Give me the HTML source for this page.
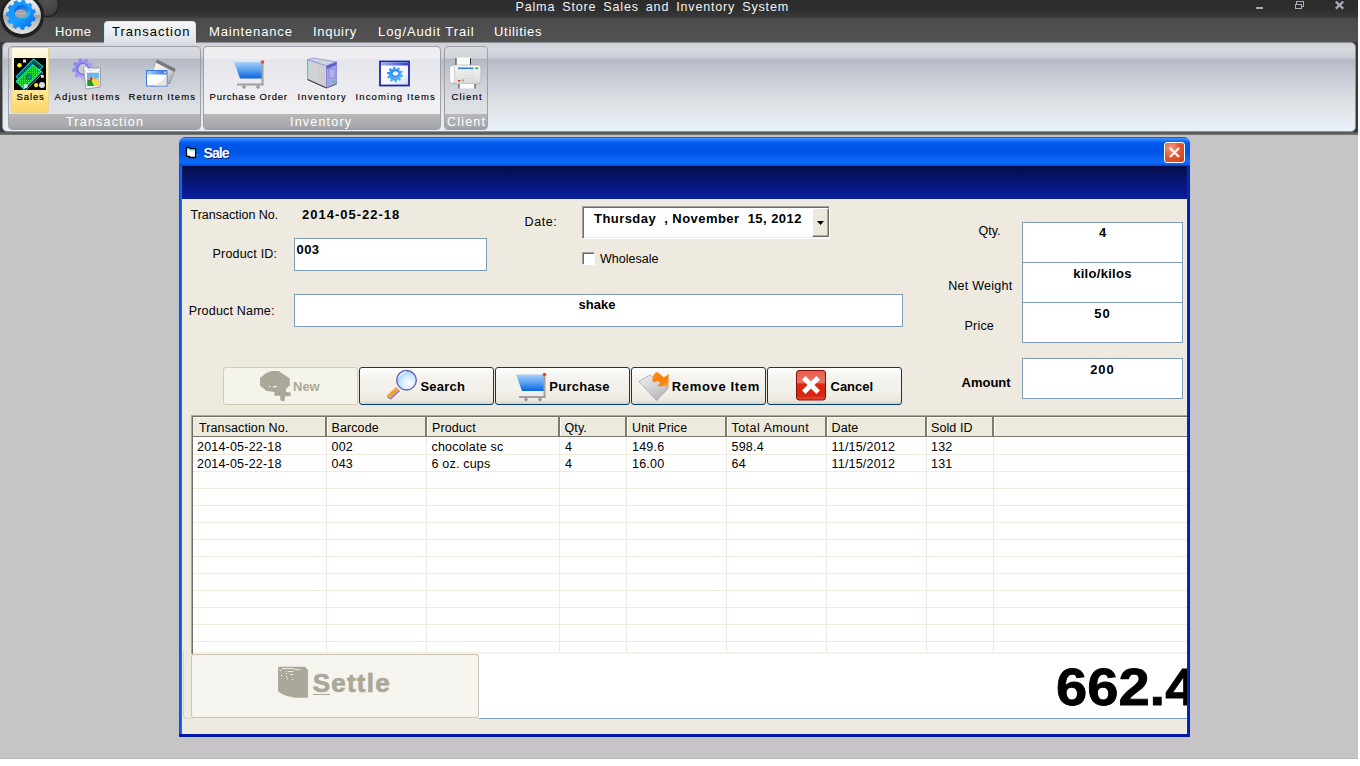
<!DOCTYPE html>
<html><head><meta charset="utf-8">
<style>
*{box-sizing:border-box;margin:0;padding:0}
html,body{width:1360px;height:766px;overflow:hidden;background:#fff;font-family:"Liberation Sans",sans-serif}
.a{position:absolute}
svg.a{overflow:visible}
.t{position:absolute;white-space:pre;line-height:1}
#app{position:absolute;left:0;top:0;width:1358px;height:759px;background:#c6c4c7;overflow:hidden}
</style></head><body>
<div id="app">
<div class="a" style="left:0px;top:0px;width:1358px;height:18px;background:linear-gradient(#2b2b2b 0%,#2e2e2e 50%,#363636 85%,#3e3e3e 100%)"></div>
<div class="t" style="left:515.5px;top:1.3px;font-size:12.6px;color:#f2f2f2;letter-spacing:0.8px;word-spacing:2.7px">Palma Store Sales and Inventory System</div>
<div class="a" style="left:1256px;top:6.8px;width:7px;height:2.5px;background:#a9adb7"></div>
<div class="a" style="left:1296px;top:1px;width:8px;height:6px;border:1px solid #a9adb7;border-width:1.5px 1px 1px 1px"></div>
<div class="a" style="left:1295px;top:3.5px;width:7px;height:5px;border:1px solid #a9adb7;border-width:1.5px 1px 1px 1px;background:#2d2d2d"></div>
<svg class="a" style="left:1334px;top:0px" width="11" height="10" viewBox="0 0 11 10"><path d="M1.8 1.6 L9.2 8.6 M9.2 1.6 L1.8 8.6" stroke="#a9adb7" stroke-width="2.2"/></svg>
<div class="a" style="left:0px;top:18px;width:1358px;height:25px;background:linear-gradient(#474747 0%,#4c4c4c 10%,#525252 100%)"></div>
<div class="a" style="left:36px;top:-7px;width:23px;height:24px;border-radius:50%;border:1.5px solid #1e1e1e;background:radial-gradient(circle at 50% 30%,#525252,#444 60%,#383838 100%)"></div>
<div class="a" style="left:0px;top:-6px;width:44px;height:44px;border-radius:50%;background:radial-gradient(circle,#202020 78%,#2c2c2c 90%,#3c3c3c 100%)"></div>
<div class="a" style="left:3px;top:-3px;width:38px;height:37px;border-radius:50%;background:linear-gradient(#f4f4f4 0%,#e0e0e0 25%,#c4c4c4 48%,#a2a2a2 50%,#b4b4b4 62%,#d2d2d2 85%,#e6e6e6 100%)"></div>
<svg class="a" style="left:0px;top:0px" width="44" height="36" viewBox="0 0 44 36"><defs><linearGradient id="og" x1="0" y1="0" x2="1" y2="1"><stop offset="0" stop-color="#1688f0"/><stop offset="0.5" stop-color="#1aa0ff"/><stop offset="1" stop-color="#0a60e0"/></linearGradient></defs><polygon points="21.00,2.00 21.86,-0.18 25.39,0.46 25.44,2.79 27.92,4.03 29.82,2.66 32.45,5.11 31.22,7.10 32.64,9.48 34.98,9.36 35.87,12.84 33.76,13.85 33.67,16.62 35.70,17.78 34.57,21.19 32.25,20.90 30.67,23.18 31.76,25.25 28.96,27.51 27.17,26.02 24.61,27.08 24.40,29.41 20.83,29.80 20.12,27.57 17.39,27.08 15.96,28.93 12.75,27.33 13.36,25.07 11.33,23.18 9.12,23.96 7.29,20.87 9.02,19.31 8.33,16.62 6.06,16.08 6.18,12.50 8.48,12.11 9.36,9.48 7.73,7.80 9.78,4.85 11.92,5.77 14.08,4.03 13.62,1.74 16.94,0.36 18.24,2.30" fill="url(#og)"/><defs><linearGradient id="oh" x1="0" y1="0" x2="1" y2="1"><stop offset="0" stop-color="#0850d0"/><stop offset="0.6" stop-color="#1a90f8"/><stop offset="1" stop-color="#50e0ff"/></linearGradient></defs><ellipse cx="22.2" cy="12" rx="8" ry="7" fill="url(#oh)"/><ellipse cx="20.8" cy="13.6" rx="6" ry="4.3" fill="#a4a4a4"/><path d="M15 13.6 h12" stroke="#b8b8b8" stroke-width="1"/></svg>
<div class="t" style="left:55px;top:25.0px;font-size:13px;color:#fff;letter-spacing:0.4px;">Home</div>
<div class="t" style="left:209px;top:25.0px;font-size:13px;color:#fff;letter-spacing:0.85px;">Maintenance</div>
<div class="t" style="left:313px;top:25.0px;font-size:13px;color:#fff;letter-spacing:0.7px;">Inquiry</div>
<div class="t" style="left:378px;top:25.0px;font-size:13px;color:#fff;letter-spacing:0.9px;">Log/Audit Trail</div>
<div class="t" style="left:494px;top:25.0px;font-size:13px;color:#fff;letter-spacing:0.7px;">Utilities</div>
<div class="a" style="left:0px;top:42px;width:1358px;height:93px;background:#3a3a3a"></div>
<div class="a" style="left:2px;top:42px;width:1354px;height:90px;border-radius:5px;background:linear-gradient(#cfd2da 0%,#d6d9df 8%,#c9ccd5 17%,#b6bac6 19%,#c4c8d1 35%,#d3d6dd 52%,#dfe2e6 70%,#e4ebf0 85%,#e8f2f8 100%);border:1px solid #8f9096"></div>
<div class="a" style="left:104px;top:20.5px;width:92px;height:24px;border-radius:4px 4px 0 0;background:linear-gradient(#f4f5f7 0%,#eceef1 40%,#dfe2e8 80%,#d6d9e0 100%);border:1px solid #c4ecf6;border-bottom:none"></div>
<div class="t" style="left:112px;top:25.0px;font-size:13px;color:#000;letter-spacing:1.0px;">Transaction</div>
<div class="a" style="left:0px;top:131.5px;width:1358px;height:3.5px;background:linear-gradient(#585c58,#5e625e 70%,#8a8a8a)"></div>
<div class="a" style="left:8px;top:46px;width:193px;height:84px;border:1px solid #9ea0a6;border-radius:4px;overflow:hidden;background:linear-gradient(#d9dbe1 0%,#d2d5dc 13%,#b4b8c4 15%,#c2c6cf 30%,#d0d3da 50%,#dcdfe3 70%,#e2e6ea 100%)"></div>
<div class="a" style="left:9px;top:114px;width:191px;height:15px;border-radius:0 0 3px 3px;background:linear-gradient(#b8b8ba 0%,#b0b0b2 40%,#a6a8ac 85%,#9a9ca0 100%)"></div>
<div class="t" style="left:66px;top:115.6px;font-size:12.5px;color:#ffffff;letter-spacing:1.2px;">Transaction</div>
<div class="a" style="left:203px;top:46px;width:238px;height:84px;border:1px solid #9ea0a6;border-radius:4px;overflow:hidden;background:linear-gradient(#efedf0 0%,#eeedf1 14%,#e4e4ec 16%,#eaeaef 40%,#efeff2 70%,#f3f3f5 100%)"></div>
<div class="a" style="left:204px;top:114px;width:236px;height:15px;border-radius:0 0 3px 3px;background:linear-gradient(#b8b8ba 0%,#b0b0b2 40%,#a6a8ac 85%,#9a9ca0 100%)"></div>
<div class="t" style="left:290px;top:115.6px;font-size:12.5px;color:#ffffff;letter-spacing:1.2px;">Inventory</div>
<div class="a" style="left:444px;top:46px;width:44px;height:84px;border:1px solid #9ea0a6;border-radius:4px;overflow:hidden;background:linear-gradient(#d9dbe1 0%,#d2d5dc 13%,#b4b8c4 15%,#c2c6cf 30%,#d0d3da 50%,#dcdfe3 70%,#e2e6ea 100%)"></div>
<div class="a" style="left:445px;top:114px;width:42px;height:15px;border-radius:0 0 3px 3px;background:linear-gradient(#b8b8ba 0%,#b0b0b2 40%,#a6a8ac 85%,#9a9ca0 100%)"></div>
<div class="t" style="left:447px;top:115.6px;font-size:12.5px;color:#ffffff;letter-spacing:1.2px;">Client</div>
<div class="a" style="left:11px;top:47px;width:38px;height:66px;border:1px solid #e8d494;border-radius:2px;background:linear-gradient(#fffbe6 0%,#fff3c4 30%,#ffe9a0 60%,#ffd66a 100%)"></div>
<div class="t" style="left:16.5px;top:91.9px;font-size:9.5px;color:#000;letter-spacing:0.9px;-webkit-text-stroke:0.15px #000">Sales</div>
<div class="t" style="left:54.5px;top:91.9px;font-size:9.5px;color:#000;letter-spacing:1.15px;-webkit-text-stroke:0.15px #000">Adjust Items</div>
<div class="t" style="left:128.5px;top:91.9px;font-size:9.5px;color:#000;letter-spacing:1.1px;-webkit-text-stroke:0.15px #000">Return Items</div>
<div class="t" style="left:209.5px;top:91.9px;font-size:9.5px;color:#000;letter-spacing:0.8px;-webkit-text-stroke:0.15px #000">Purchase Order</div>
<div class="t" style="left:297.5px;top:91.9px;font-size:9.5px;color:#000;letter-spacing:1.15px;-webkit-text-stroke:0.15px #000">Inventory</div>
<div class="t" style="left:355.5px;top:91.9px;font-size:9.5px;color:#000;letter-spacing:1.15px;-webkit-text-stroke:0.15px #000">Incoming Items</div>
<div class="t" style="left:451.5px;top:91.9px;font-size:9.5px;color:#000;letter-spacing:1.15px;-webkit-text-stroke:0.15px #000">Client</div>
<svg class="a" style="left:14px;top:58px" width="32" height="32" viewBox="0 0 32 32"><rect x="0" y="0" width="32" height="32" fill="#000"/>
<defs><pattern id="gp" width="2" height="2" patternUnits="userSpaceOnUse"><rect width="2" height="2" fill="#10b810"/><rect width="1" height="1" fill="#40f040"/></pattern></defs>
<path d="M2.2 18.7 L19.5 1.1 L28.6 8.6 L11.3 26.2z" fill="#032828" stroke="#00e0e0" stroke-width="1.1"/>
<path d="M4.5 18.5 L19.5 3.5 L26 9" stroke="#0a8080" stroke-width="1" fill="none"/>
<path d="M3 24.5 L19.5 8 L29 15 L11.5 32.5" stroke="#888" stroke-width="0.9" fill="none"/>
<path d="M2.2 23.3 L18.8 6.7 L27.3 13.5 L10 31.1z" fill="url(#gp)" stroke="#00e8e8" stroke-width="1.2"/>
<circle cx="14.8" cy="18.9" r="3" fill="#0a7878"/><path d="M13.5 19.5 Q15 21 16.5 18.5" stroke="#20e020" stroke-width="1" fill="none"/>
<rect x="9" y="1.5" width="3" height="3" fill="#ddd"/>
<circle cx="5.5" cy="7.3" r="2.3" fill="#f0f000"/><circle cx="5.5" cy="7.3" r="0.8" fill="#fff"/>
<rect x="27" y="17" width="2.8" height="2.8" fill="#ddd"/>
<circle cx="11.7" cy="28" r="2.2" fill="#ddd"/>
<circle cx="22.1" cy="27.2" r="2.1" fill="#f0f000"/>
<circle cx="28" cy="27" r="3" fill="#ddd"/></svg>
<svg class="a" style="left:68px;top:54px" width="36" height="38" viewBox="0 0 36 38"><defs><linearGradient id="gg" x1="0" y1="0" x2="1" y2="1"><stop offset="0" stop-color="#7a78f0"/><stop offset="0.6" stop-color="#a8a0f8"/><stop offset="1" stop-color="#d8d0ff"/></linearGradient></defs><polygon points="23.50,15.00 25.94,16.15 25.34,18.76 22.64,18.73 21.51,20.46 22.64,22.91 20.50,24.53 18.46,22.77 16.48,23.37 15.77,25.97 13.09,25.83 12.66,23.17 10.75,22.36 8.53,23.90 6.57,22.07 7.95,19.75 7.01,17.91 4.33,17.66 4.00,15.00 6.55,14.11 7.01,12.09 5.11,10.18 6.57,7.93 9.10,8.89 10.75,7.64 10.53,4.95 13.09,4.17 14.41,6.52 16.48,6.63 18.03,4.43 20.50,5.47 20.00,8.12 21.51,9.54 24.12,8.85 25.34,11.24 23.25,12.94" fill="url(#gg)"/><circle cx="15" cy="15" r="5.5" fill="#c4c8d2" stroke="#6a68d8" stroke-width="1.2"/><path d="M15.5 14 L18 35 L32 33 L32.5 14 Z" fill="#f4f8ff" stroke="#555" stroke-width="0.5"/><path d="M15.5 14 L19 12.5 L21 17 L32.5 14 L31 18 L18 19z" fill="#ffffff" stroke="#9ab" stroke-width="0.4"/><rect x="19" y="19" width="12" height="13" fill="#60b8f4"/><path d="M19.5 32 L22 24 L25.5 22 L27 26 L30.5 23 L31 32z" fill="#f8d848"/><path d="M19.5 32 L19.5 26 L23 25 L26 32z" fill="#10a020"/><path d="M21 26 L23.5 22.5 L25 24.5 L23 27z" fill="#e82020"/><path d="M19.5 26 L21.5 24 L22.5 26z" fill="#f89020"/></svg>
<svg class="a" style="left:142px;top:54px" width="38" height="38" viewBox="0 0 38 38"><defs><linearGradient id="bw" x1="0" y1="0" x2="1" y2="1"><stop offset="0" stop-color="#ffffff"/><stop offset="0.5" stop-color="#e8e8e8"/><stop offset="1" stop-color="#909090"/></linearGradient><linearGradient id="fw" x1="0" y1="0" x2="1" y2="0"><stop offset="0" stop-color="#a8d4fc"/><stop offset="1" stop-color="#2a6ee0"/></linearGradient></defs><path d="M15 5.5 L33.5 15 L27.5 30 L9 21z" fill="url(#bw)" stroke="#444" stroke-width="0.6" stroke-dasharray="0.8 1"/><path d="M15 5.5 L33.5 15 L32.3 18 L13.8 8.5z" fill="#787878"/><rect x="4.5" y="16.5" width="20.5" height="15.5" fill="#fff" stroke="#3a7ae8" stroke-width="1"/><rect x="5" y="17" width="19.5" height="3.5" fill="url(#fw)"/><rect x="22" y="17.5" width="1.6" height="1.6" fill="#fff"/><path d="M12 31.5 Q20 28 24.5 22 L24.5 31.5z" fill="#e8e4e0"/></svg>
<svg class="a" style="left:0px;top:0px" width="600" height="120" viewBox="0 0 600 120"><defs><linearGradient id="cg234" x1="0" y1="0" x2="0" y2="1"><stop offset="0" stop-color="#a8d0fa"/><stop offset="0.5" stop-color="#5aa0f0"/><stop offset="1" stop-color="#0a64e0"/></linearGradient></defs><path d="M234 62 L262 62 L262 78.5 L240 78.5z" fill="url(#cg234)"/><rect x="261.5" y="62" width="2" height="23" fill="#a0a0a0"/><rect x="237" y="83.5" width="26.5" height="2" fill="#a0a0a0"/><circle cx="244" cy="87" r="1.8" fill="#999"/><circle cx="258" cy="87" r="1.8" fill="#999"/><circle cx="262.5" cy="62" r="1.8" fill="#f04030"/></svg>
<svg class="a" style="left:302px;top:54px" width="40" height="38" viewBox="0 0 40 38"><path d="M5.5 5.5 L12 4 L34.5 8 L24.5 12z" fill="#c8d8d8" stroke="#9090e0" stroke-width="0.8"/><path d="M5.5 5.5 L24.5 12 L24.5 34 L5.5 25.5z" fill="#d2d2d4" stroke="#8a8ae0" stroke-width="0.8"/><path d="M5.5 25.5 L24.5 34" stroke="#444" stroke-width="1.2"/><path d="M6.5 8 L6.5 22 M17 11 L17 30 M19.5 12 L19.5 31 M22 13 L22 32" stroke="#80d0d0" stroke-width="0.7" stroke-dasharray="1 1"/><path d="M24.5 12 L34.5 8 L34.5 30 L24.5 34z" fill="#a4a4e4" stroke="#7070d0" stroke-width="0.6"/><path d="M24.5 12 L34.5 8 L34.5 11 L24.5 15z" fill="#5c5cd0"/><rect x="27" y="15" width="6" height="9" fill="#b0b0ec" stroke="#5050b0" stroke-width="0.6" stroke-dasharray="1 0.8"/><circle cx="32.2" cy="27.5" r="1" fill="#10e040"/><path d="M24.5 34 L34.5 30" stroke="#555" stroke-width="0.8"/></svg>
<svg class="a" style="left:0px;top:0px" width="500" height="100" viewBox="0 0 500 100"><defs><linearGradient id="itb" x1="0" y1="0" x2="1" y2="0"><stop offset="0" stop-color="#a8b0f0"/><stop offset="1" stop-color="#3040d0"/></linearGradient><linearGradient id="ibd" x1="0" y1="0" x2="1" y2="1"><stop offset="0" stop-color="#ffffff"/><stop offset="0.7" stop-color="#f4f4fc"/><stop offset="1" stop-color="#d0d0e8"/></linearGradient><linearGradient id="igr" x1="0" y1="0" x2="1" y2="1"><stop offset="0" stop-color="#2890f8"/><stop offset="1" stop-color="#60c0ff"/></linearGradient></defs><rect x="380" y="61.5" width="29" height="24" fill="url(#ibd)" stroke="#1a28b0" stroke-width="1.8"/><rect x="381" y="62.5" width="27" height="3" fill="url(#itb)"/><polygon points="401.30,74.50 403.26,75.24 402.89,76.94 400.78,76.88 400.10,78.02 401.23,79.71 399.88,80.88 398.21,79.65 396.95,80.19 396.81,82.20 395.00,82.39 394.41,80.46 393.05,80.19 391.70,81.74 390.12,80.88 390.83,78.99 389.90,78.02 387.86,78.51 387.11,76.94 388.85,75.81 388.70,74.50 386.74,73.76 387.11,72.06 389.22,72.12 389.90,70.98 388.77,69.29 390.12,68.12 391.79,69.35 393.05,68.81 393.19,66.80 395.00,66.61 395.59,68.54 396.95,68.81 398.30,67.26 399.88,68.12 399.17,70.01 400.10,70.98 402.14,70.49 402.89,72.06 401.15,73.19" fill="url(#igr)"/><ellipse cx="395.5" cy="73.5" rx="3.6" ry="2.8" fill="#f0f4ff" stroke="#1a70e0" stroke-width="1"/></svg>
<svg class="a" style="left:0px;top:0px" width="500" height="100" viewBox="0 0 500 100"><defs><linearGradient id="pb" x1="0" y1="0" x2="0" y2="1"><stop offset="0" stop-color="#f8f8f8"/><stop offset="1" stop-color="#d8d8d8"/></linearGradient></defs><rect x="456" y="57.5" width="14.5" height="8" fill="#fafafa"/><path d="M456 58 L456 65 M470.5 58 L470.5 65" stroke="#222" stroke-width="0.9"/><path d="M453 65 L478 65 Q481 65 481 69 L481 81 Q481 84 477 84 L454 84 Q450 84 450 81 L450 69 Q450 65 453 65z" fill="url(#pb)" stroke="#999" stroke-width="0.5"/><path d="M450 66 Q449 75 450 83 L454.5 83 L454.5 66z" fill="#fcfcfc" stroke="#b0b0b0" stroke-width="0.5"/><rect x="458" y="67.5" width="15.5" height="1.6" fill="#3a80e0"/><rect x="475.5" y="67.3" width="2.6" height="2" fill="#30c030"/><path d="M465 72 h9 M465 75 h9 M465 78 h9" stroke="#d0d0d0" stroke-width="0.8" stroke-dasharray="1.2 1"/><rect x="458" y="80" width="2.5" height="1.5" fill="#e03030"/><rect x="462.5" y="79.5" width="1.2" height="2" fill="#30c030"/><rect x="459" y="84" width="16" height="4.5" fill="#fafafa"/><path d="M459 84 L459 88.5 M475 84 L475 88.5" stroke="#222" stroke-width="0.9"/></svg>
<div class="a" style="left:179px;top:137px;width:1011px;height:600px;background:linear-gradient(90deg,#0a4ee8 0,#0831d9 3px,#0831d9 calc(100% - 3px),#0a3ad0 100%);border-radius:7px 7px 0 0"></div>
<div class="a" style="left:179px;top:137px;width:1011px;height:29px;border-radius:7px 7px 0 0;background:linear-gradient(#0a48d8 0%,#3a94ff 6%,#1a74fa 12%,#0058ea 22%,#0054e6 55%,#0a68fa 80%,#0a6cff 90%,#0048d0 100%)"></div>
<div class="a" style="left:179px;top:166px;width:3px;height:571px;background:linear-gradient(90deg,#0048d8,#1a70ff)"></div>
<div class="a" style="left:1187px;top:166px;width:3px;height:571px;background:linear-gradient(90deg,#0030c0,#001ea0)"></div>
<div class="a" style="left:179px;top:734px;width:1011px;height:3px;background:#0019a8"></div>
<svg class="a" style="left:185px;top:146px" width="14" height="13" viewBox="0 0 14 13"><path d="M1.5 1.5 L4.5 1.5 L4.5 2.6 L10.6 2.6 L10.6 11.5 L4.5 11.5 L4.5 10.4 L1.5 10.4z" fill="#fff" stroke="#000" stroke-width="1.3"/><path d="M2.3 2.6 L4.3 2.6 M5 3.8 L10 3.8" stroke="#10e0e8" stroke-width="1.2"/><rect x="11.5" y="8.5" width="1.5" height="1.2" fill="#a08860"/></svg>
<div class="t" style="left:203.5px;top:146.1px;font-size:14px;font-weight:bold;color:#fff;letter-spacing:-0.9px;text-shadow:1px 1px 0 #0a1a70">Sale</div>
<div class="a" style="left:1164px;top:142px;width:21px;height:21px;border:1px solid #fff;border-radius:3px;background:radial-gradient(circle at 30% 25%,#f39a80 0%,#e45a36 45%,#cc3e18 100%)"></div>
<svg class="a" style="left:1164px;top:142px" width="21" height="21" viewBox="0 0 21 21"><path d="M6 6 L15 15 M15 6 L6 15" stroke="#fff" stroke-width="2.2"/></svg>
<div class="a" style="left:182px;top:166px;width:1005px;height:33px;background:linear-gradient(#040c48 0%,#061466 35%,#08198a 70%,#0a1e9c 100%)"></div>
<div class="a" style="left:182px;top:199px;width:1005px;height:535px;background:#eeeae0"></div>
<div class="t" style="left:190.5px;top:208.7px;font-size:12.5px;color:#000;">Transaction No.</div>
<div class="t" style="left:302px;top:208.3px;font-size:13px;font-weight:bold;color:#000;letter-spacing:1px;">2014-05-22-18</div>
<div class="t" style="left:212.5px;top:248.4px;font-size:12.5px;color:#000;letter-spacing:0.2px;">Product ID:</div>
<div class="a" style="left:294px;top:238px;width:193px;height:33px;background:#fff;border:1px solid #7f9db9"></div>
<div class="t" style="left:296.5px;top:243.0px;font-size:13px;font-weight:bold;color:#000;letter-spacing:0.4px;">003</div>
<div class="t" style="left:188.7px;top:304.7px;font-size:12.5px;color:#000;letter-spacing:0.2px;">Product Name:</div>
<div class="a" style="left:294px;top:294px;width:609px;height:33px;background:#fff;border:1px solid #7f9db9"></div>
<div class="t" style="left:578.5px;top:298.4px;font-size:13px;font-weight:bold;color:#000;">shake</div>
<div class="t" style="left:524.5px;top:216.4px;font-size:12.5px;color:#000;letter-spacing:0.6px;">Date:</div>
<div class="a" style="left:582px;top:206px;width:248px;height:33px;background:#fff;border:1px solid;border-color:#a0a0a0 #fff #fff #a0a0a0;box-shadow:inset 1px 1px 0 #716f64, inset -1px -1px 0 #f1efe2"></div>
<div class="t" style="left:594px;top:211.6px;font-size:13px;font-weight:bold;color:#000;letter-spacing:0.45px;">Thursday  , November  15, 2012</div>
<div class="a" style="left:812px;top:208px;width:17px;height:29px;background:#ece9dc;border:1px solid;border-color:#fff #716f64 #716f64 #fff;box-shadow:inset -1px -1px 0 #aca899"></div>
<svg class="a" style="left:817px;top:221px" width="7" height="4" viewBox="0 0 7 4"><path d="M0 0 L7 0 L3.5 4z" fill="#000"/></svg>
<div class="a" style="left:582px;top:252px;width:13px;height:13px;background:#fff;border:1px solid;border-color:#a0a0a0 #fff #fff #a0a0a0;box-shadow:inset 1px 1px 0 #716f64"></div>
<div class="t" style="left:600px;top:252.6px;font-size:12.5px;color:#000;">Wholesale</div>
<div class="t" style="left:978.5px;top:224.7px;font-size:12.5px;color:#000;">Qty.</div>
<div class="t" style="left:948.3px;top:279.8px;font-size:12.5px;color:#000;letter-spacing:0.25px;">Net Weight</div>
<div class="t" style="left:964.5px;top:320.0px;font-size:12.5px;color:#000;letter-spacing:0.2px;">Price</div>
<div class="t" style="left:961.5px;top:375.7px;font-size:13px;font-weight:bold;color:#000;">Amount</div>
<div class="a" style="left:1022px;top:222px;width:161px;height:41px;background:#fff;border:1px solid #7f9db9"></div>
<div class="a" style="left:1022px;top:262px;width:161px;height:41px;background:#fff;border:1px solid #7f9db9"></div>
<div class="a" style="left:1022px;top:302px;width:161px;height:41px;background:#fff;border:1px solid #7f9db9"></div>
<div class="a" style="left:1022px;top:358px;width:161px;height:41px;background:#fff;border:1px solid #7f9db9"></div>
<div class="t" style="left:1022px;width:161px;text-align:center;top:226.4px;font-size:13px;font-weight:bold;">4</div>
<div class="t" style="left:1022px;width:161px;text-align:center;top:266.9px;font-size:13px;font-weight:bold;letter-spacing:0.3px;">kilo/kilos</div>
<div class="t" style="left:1022px;width:161px;text-align:center;top:306.5px;font-size:13px;font-weight:bold;letter-spacing:1px;">50</div>
<div class="t" style="left:1022px;width:161px;text-align:center;top:362.7px;font-size:13px;font-weight:bold;letter-spacing:1px;">200</div>
<div class="a" style="left:223px;top:367px;width:135px;height:38px;border:1px solid #d1ccba;border-radius:3px;background:#f5f4ea"></div>
<div class="t" style="left:293px;top:380.0px;font-size:13px;font-weight:bold;color:#aca899;">New</div>
<div class="a" style="left:359px;top:367px;width:135px;height:38px;border:1px solid #003c74;border-radius:3px;background:linear-gradient(#ffffff 0%,#fbfbf8 8%,#f4f3ee 30%,#f1efe8 70%,#ebe8df 90%,#d8d2c4 100%)"></div>
<div class="a" style="left:495px;top:367px;width:135px;height:38px;border:1px solid #003c74;border-radius:3px;background:linear-gradient(#ffffff 0%,#fbfbf8 8%,#f4f3ee 30%,#f1efe8 70%,#ebe8df 90%,#d8d2c4 100%)"></div>
<div class="a" style="left:631px;top:367px;width:135px;height:38px;border:1px solid #003c74;border-radius:3px;background:linear-gradient(#ffffff 0%,#fbfbf8 8%,#f4f3ee 30%,#f1efe8 70%,#ebe8df 90%,#d8d2c4 100%)"></div>
<div class="a" style="left:767px;top:367px;width:135px;height:38px;border:1px solid #003c74;border-radius:3px;background:linear-gradient(#ffffff 0%,#fbfbf8 8%,#f4f3ee 30%,#f1efe8 70%,#ebe8df 90%,#d8d2c4 100%)"></div>
<div class="t" style="left:420.5px;top:380.0px;font-size:13px;font-weight:bold;color:#000;letter-spacing:0.2px;">Search</div>
<div class="t" style="left:549.3px;top:380.0px;font-size:13px;font-weight:bold;color:#000;letter-spacing:0.25px;">Purchase</div>
<div class="t" style="left:671.8px;top:380.0px;font-size:13px;font-weight:bold;color:#000;letter-spacing:0.65px;">Remove Item</div>
<div class="t" style="left:830.5px;top:380.0px;font-size:13px;font-weight:bold;color:#000;">Cancel</div>
<svg class="a" style="left:255px;top:366px" width="40" height="38" viewBox="0 0 40 38"><path d="M16.4 5 L23.6 5 L29 8.5 L34.8 12.5 L34.8 19.5 L31 23 L31 26 L35.7 26.5 L35.7 30 L29.8 30.5 L29.8 34.5 L27.5 35.5 L25.2 34 L25.2 29.8 L19.4 29.8 L19.4 26 L11.5 25 L5 19.5 L5 12 L11 7z" fill="#aca899"/><rect x="14" y="20" width="1.2" height="1.2" fill="#f5f4ea"/><rect x="18" y="20" width="4" height="1.2" fill="#f5f4ea"/></svg>
<svg class="a" style="left:380px;top:366px" width="40" height="38" viewBox="0 0 40 38"><defs><radialGradient id="mg" cx="0.6" cy="0.65" r="0.6"><stop offset="0" stop-color="#ffffff"/><stop offset="0.6" stop-color="#d0ecfc"/><stop offset="1" stop-color="#a0d0f8"/></radialGradient></defs><path d="M7 29.5 L16 21 L19 24 L10 32.5z" fill="#f8a030"/><path d="M10 32.5 L19 24 L20 25 L11 33.5z" fill="#8a70c8"/><path d="M7 29.5 L10 32.5 L11 33.5 L8 32z" fill="#705090"/><circle cx="26.5" cy="14.2" r="9.8" fill="url(#mg)" stroke="#6a5aa8" stroke-width="1.3"/><path d="M19 11 Q21 7 26 6" stroke="#fff" stroke-width="1.5" fill="none" opacity="0.8"/></svg>
<svg class="a" style="left:0px;top:0px" width="600" height="420" viewBox="0 0 600 420"><defs><linearGradient id="cg516" x1="0" y1="0" x2="0" y2="1"><stop offset="0" stop-color="#a8d0fa"/><stop offset="0.5" stop-color="#5aa0f0"/><stop offset="1" stop-color="#0a64e0"/></linearGradient></defs><path d="M516 374.5 L544 374.5 L544 391.0 L522 391.0z" fill="url(#cg516)"/><rect x="543.5" y="374.5" width="2" height="23" fill="#a0a0a0"/><rect x="519" y="396.0" width="26.5" height="2" fill="#a0a0a0"/><circle cx="526" cy="399.5" r="1.8" fill="#999"/><circle cx="540" cy="399.5" r="1.8" fill="#999"/><circle cx="544.5" cy="374.5" r="1.8" fill="#f04030"/></svg>
<svg class="a" style="left:635px;top:368px" width="40" height="36" viewBox="0 0 40 36"><defs><linearGradient id="rg" x1="0" y1="0" x2="0.6" y2="1"><stop offset="0" stop-color="#f2f2f2"/><stop offset="1" stop-color="#b8b8bc"/></linearGradient><linearGradient id="ag" x1="0" y1="0" x2="1" y2="1"><stop offset="0" stop-color="#ff8a10"/><stop offset="0.7" stop-color="#f88010"/><stop offset="1" stop-color="#ffb060"/></linearGradient></defs><path d="M4 13.6 L14.6 7 L33.8 19.7 L21.6 32.4 Z" fill="url(#rg)" stroke="#707070" stroke-width="0.7" stroke-dasharray="1 0.6"/><path d="M17.5 11 Q18 5 22.5 4 L29 9.5 L33.6 6 L33.6 18.2 L22 18.2 L25.5 14.8 L22.5 12.8 Q20 15.5 17.5 13z" fill="url(#ag)"/></svg>
<svg class="a" style="left:796px;top:370px" width="30" height="31" viewBox="0 0 30 31"><defs><linearGradient id="xg" x1="0" y1="0" x2="0" y2="1"><stop offset="0" stop-color="#ec5a48"/><stop offset="0.42" stop-color="#e87868"/><stop offset="0.45" stop-color="#de2a14"/><stop offset="0.85" stop-color="#d82410"/><stop offset="1" stop-color="#e85040"/></linearGradient></defs><rect x="0.5" y="0.5" width="29" height="29.5" rx="2.5" fill="url(#xg)" stroke="#801010" stroke-width="1"/><path d="M7.8 7.8 L22.2 22.2 M22.2 7.8 L7.8 22.2" stroke="#fff" stroke-width="5"/></svg>
<div class="a" style="left:191px;top:415px;width:996px;height:239px;background:#fff;border-left:1px solid #aca899;border-top:1px solid #aca899"></div>
<div class="a" style="left:192px;top:416px;width:995px;height:238px;border-left:1px solid #716f64;border-top:1px solid #716f64"></div>
<div class="a" style="left:193px;top:417px;width:994px;height:20px;background:#ece9dd;border-top:1px solid #fff;border-bottom:1px solid #7b7768"></div>
<div class="a" style="left:325px;top:416px;width:1.5px;height:20px;background:#7e7a6c"></div>
<div class="a" style="left:326.5px;top:417px;width:1px;height:19px;background:#fff"></div>
<div class="a" style="left:326px;top:437px;width:1px;height:217px;background:#efebde"></div>
<div class="a" style="left:425px;top:416px;width:1.5px;height:20px;background:#7e7a6c"></div>
<div class="a" style="left:426.5px;top:417px;width:1px;height:19px;background:#fff"></div>
<div class="a" style="left:426px;top:437px;width:1px;height:217px;background:#efebde"></div>
<div class="a" style="left:558px;top:416px;width:1.5px;height:20px;background:#7e7a6c"></div>
<div class="a" style="left:559.5px;top:417px;width:1px;height:19px;background:#fff"></div>
<div class="a" style="left:559px;top:437px;width:1px;height:217px;background:#efebde"></div>
<div class="a" style="left:625px;top:416px;width:1.5px;height:20px;background:#7e7a6c"></div>
<div class="a" style="left:626.5px;top:417px;width:1px;height:19px;background:#fff"></div>
<div class="a" style="left:626px;top:437px;width:1px;height:217px;background:#efebde"></div>
<div class="a" style="left:725px;top:416px;width:1.5px;height:20px;background:#7e7a6c"></div>
<div class="a" style="left:726.5px;top:417px;width:1px;height:19px;background:#fff"></div>
<div class="a" style="left:726px;top:437px;width:1px;height:217px;background:#efebde"></div>
<div class="a" style="left:825px;top:416px;width:1.5px;height:20px;background:#7e7a6c"></div>
<div class="a" style="left:826.5px;top:417px;width:1px;height:19px;background:#fff"></div>
<div class="a" style="left:826px;top:437px;width:1px;height:217px;background:#efebde"></div>
<div class="a" style="left:925px;top:416px;width:1.5px;height:20px;background:#7e7a6c"></div>
<div class="a" style="left:926.5px;top:417px;width:1px;height:19px;background:#fff"></div>
<div class="a" style="left:926px;top:437px;width:1px;height:217px;background:#efebde"></div>
<div class="a" style="left:992px;top:416px;width:1.5px;height:20px;background:#7e7a6c"></div>
<div class="a" style="left:993.5px;top:417px;width:1px;height:19px;background:#fff"></div>
<div class="a" style="left:993px;top:437px;width:1px;height:217px;background:#efebde"></div>
<div class="a" style="left:193px;top:454px;width:994px;height:1px;background:#efebde"></div>
<div class="a" style="left:193px;top:471px;width:994px;height:1px;background:#efebde"></div>
<div class="a" style="left:193px;top:488px;width:994px;height:1px;background:#efebde"></div>
<div class="a" style="left:193px;top:505px;width:994px;height:1px;background:#efebde"></div>
<div class="a" style="left:193px;top:522px;width:994px;height:1px;background:#efebde"></div>
<div class="a" style="left:193px;top:539px;width:994px;height:1px;background:#efebde"></div>
<div class="a" style="left:193px;top:556px;width:994px;height:1px;background:#efebde"></div>
<div class="a" style="left:193px;top:573px;width:994px;height:1px;background:#efebde"></div>
<div class="a" style="left:193px;top:590px;width:994px;height:1px;background:#efebde"></div>
<div class="a" style="left:193px;top:607px;width:994px;height:1px;background:#efebde"></div>
<div class="a" style="left:193px;top:624px;width:994px;height:1px;background:#efebde"></div>
<div class="a" style="left:193px;top:641px;width:994px;height:1px;background:#efebde"></div>
<div class="t" style="left:199px;top:421.7px;font-size:12.5px;color:#000;letter-spacing:0.1px;">Transaction No.</div>
<div class="t" style="left:331.5px;top:421.7px;font-size:12.5px;color:#000;letter-spacing:0.1px;">Barcode</div>
<div class="t" style="left:432px;top:421.7px;font-size:12.5px;color:#000;letter-spacing:0.1px;">Product</div>
<div class="t" style="left:564.5px;top:421.7px;font-size:12.5px;color:#000;letter-spacing:0.1px;">Qty.</div>
<div class="t" style="left:632px;top:421.7px;font-size:12.5px;color:#000;letter-spacing:0.1px;">Unit Price</div>
<div class="t" style="left:731.5px;top:421.7px;font-size:12.5px;color:#000;letter-spacing:0.45px;">Total Amount</div>
<div class="t" style="left:831.5px;top:421.7px;font-size:12.5px;color:#000;letter-spacing:0.1px;">Date</div>
<div class="t" style="left:931px;top:421.7px;font-size:12.5px;color:#000;letter-spacing:0.1px;">Sold ID</div>
<div class="t" style="left:197px;top:440.9px;font-size:12.5px;color:#000;letter-spacing:0.2px;">2014-05-22-18</div>
<div class="t" style="left:331.5px;top:440.9px;font-size:12.5px;color:#000;letter-spacing:0.2px;">002</div>
<div class="t" style="left:431.5px;top:440.9px;font-size:12.5px;color:#000;letter-spacing:0.2px;">chocolate sc</div>
<div class="t" style="left:565px;top:440.9px;font-size:12.5px;color:#000;letter-spacing:0.2px;">4</div>
<div class="t" style="left:632px;top:440.9px;font-size:12.5px;color:#000;letter-spacing:0.2px;">149.6</div>
<div class="t" style="left:731.5px;top:440.9px;font-size:12.5px;color:#000;letter-spacing:0.2px;">598.4</div>
<div class="t" style="left:831.5px;top:440.9px;font-size:12.5px;color:#000;letter-spacing:0.2px;">11/15/2012</div>
<div class="t" style="left:931px;top:440.9px;font-size:12.5px;color:#000;letter-spacing:0.2px;">132</div>
<div class="t" style="left:197px;top:457.9px;font-size:12.5px;color:#000;letter-spacing:0.2px;">2014-05-22-18</div>
<div class="t" style="left:331.5px;top:457.9px;font-size:12.5px;color:#000;letter-spacing:0.2px;">043</div>
<div class="t" style="left:431.5px;top:457.9px;font-size:12.5px;color:#000;letter-spacing:0.2px;">6 oz. cups</div>
<div class="t" style="left:565px;top:457.9px;font-size:12.5px;color:#000;letter-spacing:0.2px;">4</div>
<div class="t" style="left:632px;top:457.9px;font-size:12.5px;color:#000;letter-spacing:0.2px;">16.00</div>
<div class="t" style="left:731.5px;top:457.9px;font-size:12.5px;color:#000;letter-spacing:0.2px;">64</div>
<div class="t" style="left:831.5px;top:457.9px;font-size:12.5px;color:#000;letter-spacing:0.2px;">11/15/2012</div>
<div class="t" style="left:931px;top:457.9px;font-size:12.5px;color:#000;letter-spacing:0.2px;">131</div>
<div class="a" style="left:193px;top:652px;width:994px;height:2px;background:#f4f2ea"></div>
<div class="a" style="left:183px;top:650px;width:10px;height:69px;border-left:1px solid #d8d4c4;border-bottom:1px solid #d8d4c4;border-radius:0 0 0 4px"></div>
<div class="a" style="left:191px;top:654px;width:288px;height:64px;border:1px solid #cac4b0;border-radius:3px;background:#f5f4ee"></div>
<svg class="a" style="left:272px;top:660px" width="40" height="42" viewBox="0 0 40 42"><path d="M7 6.8 L33 6.8 L36 10 L36 37.8 L23 37.8 L15 36 L10 34 L6 31.5 L6 8z" fill="#aca899"/><path d="M10 8.6 H22 M22 9.6 H27 M7.5 10.5 H9.5 M16 11.5 H21 M18 14.5 H21" stroke="#f5f4ee" stroke-width="0.9"/><g fill="#f5f4ee"><rect x="28" y="9" width="1" height="1"/><rect x="14" y="11" width="1" height="1"/><rect x="14" y="13" width="1" height="1"/><rect x="9" y="15" width="1" height="1"/><rect x="14" y="16" width="1" height="1"/><rect x="15" y="18" width="1" height="1"/><rect x="20" y="19" width="1" height="1"/></g></svg>
<div class="t" style="left:312.8px;top:670.3px;font-size:26px;font-weight:bold;color:#aca899;letter-spacing:1.2px;-webkit-text-stroke:0.7px #aca899">Settle</div>
<div class="a" style="left:313px;top:693.5px;width:17px;height:1.5px;background:#aca899"></div>
<div class="a" style="left:479px;top:654px;width:708px;height:65px;background:#fff;border-bottom:1px solid #7f9db9"></div>
<div class="a" style="left:479px;top:654px;width:708px;height:64px;overflow:hidden"><div class="t" style="left:577.0px;top:8.1px;font-size:51px;font-weight:bold;color:#000;transform:scaleX(1.1);transform-origin:0 0;-webkit-text-stroke:0.8px #000">662.4</div>
</div>
<div class="a" style="left:0px;top:757.5px;width:1358px;height:1.5px;background:#bab8bb"></div>
</div>
</body></html>
